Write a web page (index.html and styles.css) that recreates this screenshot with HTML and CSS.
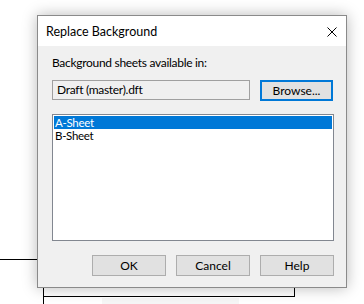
FILE: index.html
```html
<!DOCTYPE html>
<html lang="en">
<head>
    <meta charset="UTF-8">
    <title>Replace Background</title>
    <link rel="stylesheet" href="styles.css">
</head>
<body>
    <div class="sheet">
        <!-- drawing behind the dialog -->
        <div class="line-left"></div>
        <div class="frame"></div>
        <div class="frame-stem"></div>
        <div class="shade"></div>

        <div class="dialog">
            <div class="titlebar">
                <span class="title">Replace Background</span>
                <svg class="close" width="10" height="10" viewBox="0 0 10 10">
                    <path d="M0.5 0.5 L9.5 9.5 M9.5 0.5 L0.5 9.5" stroke="#000" stroke-width="1" fill="none"/>
                </svg>
            </div>
            <div class="content">
                <div class="label">Background sheets available in:</div>
                <div class="path-row">
                    <div class="path-box">Draft (master).dft</div>
                    <button class="btn btn-default">Browse...</button>
                </div>
                <div class="list">
                    <div class="item selected">A-Sheet</div>
                    <div class="item">B-Sheet</div>
                </div>
                <div class="actions">
                    <button class="btn">OK</button>
                    <button class="btn">Cancel</button>
                    <button class="btn">Help</button>
                </div>
            </div>
        </div>
    </div>
</body>
</html>
```
FILE: styles.css
```css
body {
    margin: 0;
    background-color: #fff;
    font-family: 'Lato', 'Noto Sans', sans-serif;
    font-size: 12px;
    color: #000;
}

.sheet {
    position: relative;
    width: 364px;
    height: 304px;
    overflow: hidden;
}

/* drawing lines */
.line-left {
    position: absolute;
    left: 0;
    top: 259px;
    width: 44px;
    height: 1px;
    background-color: #000;
}

.frame {
    position: absolute;
    left: 43px;
    top: 259px;
    width: 250px;
    height: 36px;
    border: 1px solid #000;
}

.frame-stem {
    position: absolute;
    left: 43px;
    top: 296px;
    width: 1px;
    height: 10px;
    background-color: #000;
}

.shade {
    position: absolute;
    left: 102px;
    top: 298px;
    width: 137px;
    height: 6px;
    background-color: #f6f6f6;
}

/* dialog window */
.dialog {
    position: absolute;
    left: 37px;
    top: 15px;
    width: 308px;
    height: 271px;
    border: 1px solid #8a8a8a;
    background-color: #f0f0f0;
    box-shadow: 0 0 14px rgba(0, 0, 0, 0.28);
    display: flex;
    flex-direction: column;
}

.titlebar {
    height: 30px;
    background-color: #fff;
    display: flex;
    align-items: center;
    justify-content: space-between;
    padding: 0 9px 0 8px;
}

.title {
    font-size: 12.5px;
    padding-top: 1px;
}

.close {
    display: block;
    margin-top: 1px;
}

.content {
    padding: 9px 12px 0 14px;
    display: flex;
    flex-direction: column;
    letter-spacing: -0.3px;
}

.label {
    height: 16px;
    line-height: 16px;
    margin-bottom: 9px;
}

.path-row {
    display: flex;
    align-items: flex-start;
}

.path-box {
    height: 18px;
    line-height: 18px;
    border: 1px solid #a0a0a0;
    padding-left: 4px;
    width: 192px;
}

.btn {
    font-family: 'Lato', 'Noto Sans', sans-serif;
    font-size: 12px;
    background-color: #e1e1e1;
    border: 1px solid #adadad;
    width: 74px;
    height: 21px;
    padding: 0;
    color: #000;
}

.btn-default {
    margin-left: 10px;
    width: 73px;
    border: 2px solid #0078d7;
}

.list {
    margin-top: 13px;
    width: 278px;
    height: 123px;
    border: 1px solid #828790;
    background-color: #fff;
    padding: 1px;
}

.item {
    height: 13px;
    line-height: 13px;
    font-size: 11.5px;
    padding-left: 1px;
    overflow: hidden;
}

.item.selected {
    background-color: #0078d7;
    color: #fff;
}

.actions {
    display: flex;
    justify-content: flex-end;
    gap: 10px;
    margin-top: 14px;
}
```
